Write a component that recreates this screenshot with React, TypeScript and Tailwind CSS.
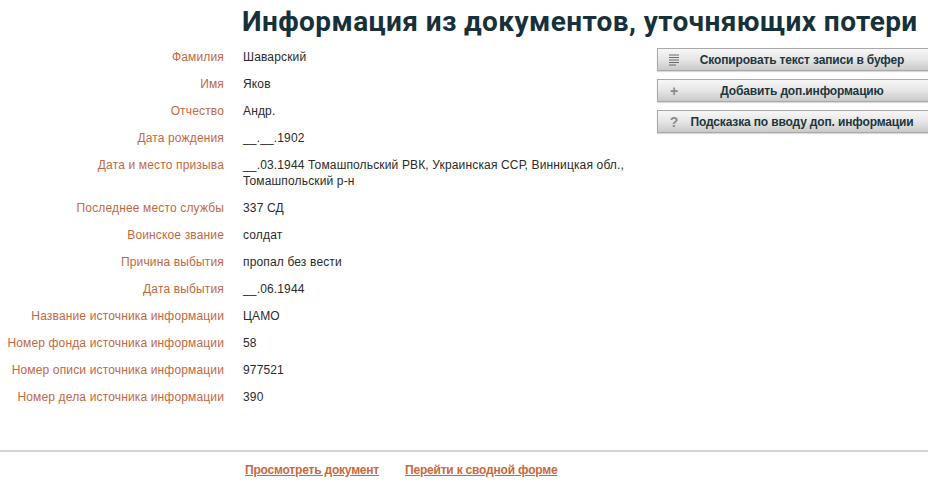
const rows: [string, string[]][] = [
  ["Фамилия", ["Шаварский"]],
  ["Имя", ["Яков"]],
  ["Отчество", ["Андр."]],
  ["Дата рождения", ["__.__.1902"]],
  [
    "Дата и место призыва",
    ["__.03.1944 Томашпольский РВК, Украинская ССР, Винницкая обл.,", "Томашпольский р-н"],
  ],
  ["Последнее место службы", ["337 СД"]],
  ["Воинское звание", ["солдат"]],
  ["Причина выбытия", ["пропал без вести"]],
  ["Дата выбытия", ["__.06.1944"]],
  ["Название источника информации", ["ЦАМО"]],
  ["Номер фонда источника информации", ["58"]],
  ["Номер описи источника информации", ["977521"]],
  ["Номер дела источника информации", ["390"]],
];

function ListIcon() {
  return (
    <svg width="10" height="12" viewBox="0 0 10 12" className="shrink-0">
      {[1, 3.5, 6, 8.5, 11].map((y, i) => (
        <line key={y} x1="0" x2={i === 4 ? 7 : 10} y1={y} y2={y} stroke="#6b6b6b" strokeWidth="1" />
      ))}
    </svg>
  );
}

function ActionButton({ icon, label }: { icon: React.ReactNode; label: string }) {
  return (
    <button
      type="button"
      className="relative flex h-[23px] w-[290px] shrink-0 items-center justify-center border border-[#a9a9a9] bg-gradient-to-b from-[#f7f7f7] via-[#e6e6e6] to-[#c9c9c9] text-[12px] font-bold tracking-[-0.15px] text-[#1c363c] shadow-[0_1px_1px_rgba(0,0,0,0.15)]"
    >
      <span className="absolute left-[10px] top-1/2 flex w-[12px] -translate-y-1/2 justify-center text-[14px] font-bold text-[#8a8a8a]">
        {icon}
      </span>
      {label}
    </button>
  );
}

export default function App() {
  return (
    <div className="min-h-[490px] w-[928px] overflow-hidden bg-white font-['Liberation_Sans',Arial,sans-serif]">
      <h1 className="whitespace-nowrap pl-[242px] pt-[5px] font-['Roboto',sans-serif] text-[28px] font-bold leading-[34px] tracking-[0.4px] text-[#17313a]">
        Информация из документов, уточняющих потери
      </h1>

      <div className="flex pt-[10px]">
        <div className="flex w-[657px] shrink-0 flex-col gap-[11px] text-[12px] leading-[16px] tracking-[0.15px]">
          {rows.map(([label, value]) => (
            <div key={label} className="flex gap-[19px]">
              <div className="w-[224px] shrink-0 text-right text-[#c0683f]">{label}</div>
              <div className="text-[#2a2a2a]">
                {value.map((line) => (
                  <div key={line}>{line}</div>
                ))}
              </div>
            </div>
          ))}
        </div>

        <div className="-mt-[1px] flex shrink-0 flex-col gap-[8px]">
          <ActionButton icon={<ListIcon />} label="Скопировать текст записи в буфер" />
          <ActionButton icon="+" label="Добавить доп.информацию" />
          <ActionButton icon="?" label="Подсказка по вводу доп. информации" />
        </div>
      </div>

      <div className="mt-[45px] border-t-2 border-[#d4d4d4]" />

      <div className="flex gap-[26px] pl-[245px] pt-[10px] text-[12px] font-bold leading-[16px] tracking-[-0.2px]">
        <a href="#" className="text-[#c8683c] underline">
          Просмотреть документ
        </a>
        <a href="#" className="text-[#c8683c] underline">
          Перейти к сводной форме
        </a>
      </div>
    </div>
  );
}
